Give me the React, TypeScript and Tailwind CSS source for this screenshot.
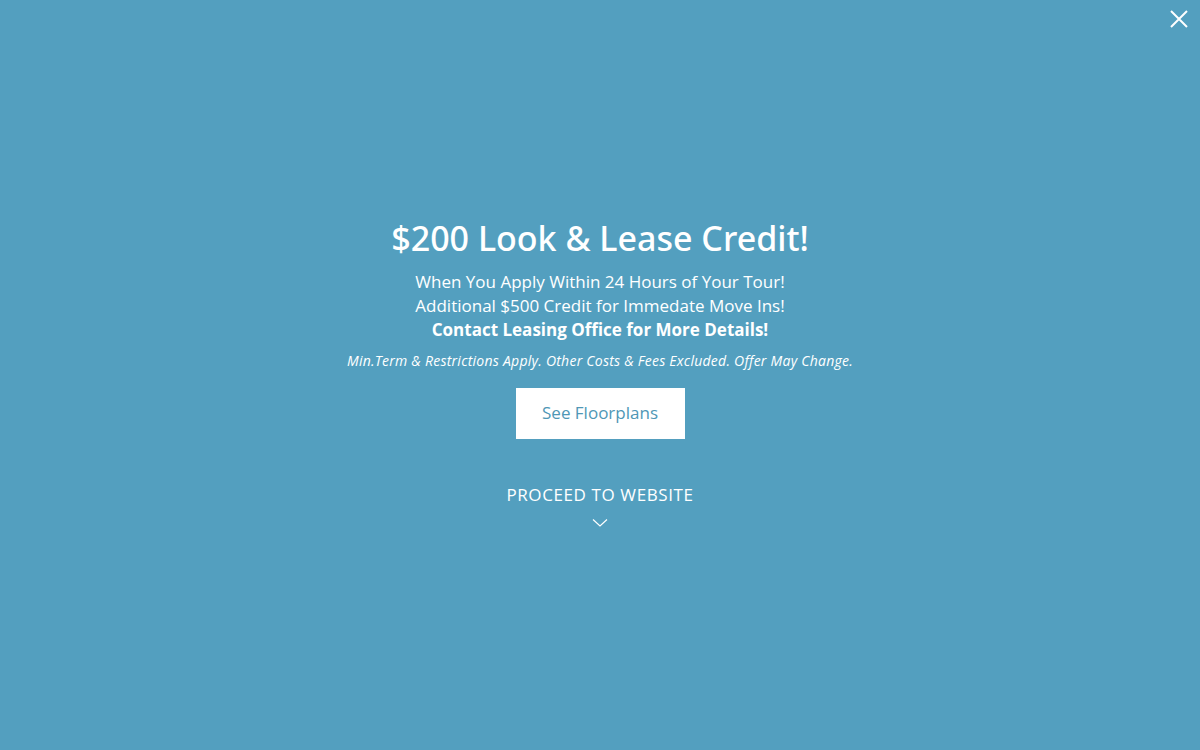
import React from "react";

export default function App() {
  return (
    <div className="relative w-full h-[750px] bg-[#539fbf] flex flex-col items-center justify-center pb-[7px] text-white" style={{ fontFamily: '"Open Sans", sans-serif' }}>
      <button className="absolute top-[9px] right-[11px] w-[20px] h-[20px]" aria-label="close">
        <svg viewBox="0 0 20 20" width="20" height="20" fill="none" stroke="white" strokeWidth="2">
          <path d="M2 2 L18 18 M18 2 L2 18" />
        </svg>
      </button>
      <h1 className="text-[34px] leading-[44px] font-medium" style={{ fontFamily: '"Noto Sans", sans-serif' }}>$200 Look &amp; Lease Credit!</h1>
      <div className="mt-[10px] text-[17px] leading-[24px] text-center">
        <p>When You Apply Within 24 Hours of Your Tour!</p>
        <p>Additional $500 Credit for Immedate Move Ins!</p>
        <p className="font-bold">Contact Leasing Office for More Details!</p>
      </div>
      <p className="mt-[7px] text-[14px] leading-[24px] italic tracking-[0.25px]">Min.Term &amp; Restrictions Apply. Other Costs &amp; Fees Excluded. Offer May Change.</p>
      <button className="mt-[15px] w-[169px] h-[51px] bg-white text-[#4f97b6] text-[17px]">See Floorplans</button>
      <p className="mt-[44px] text-[17px] leading-[24px] tracking-[0.6px]">PROCEED TO WEBSITE</p>
      <svg className="mt-[11px]" width="16" height="10" viewBox="0 0 16 10" fill="none" stroke="white" strokeWidth="1.2">
        <path d="M1 1.5 L8 8 L15 1.5" />
      </svg>
    </div>
  );
}
